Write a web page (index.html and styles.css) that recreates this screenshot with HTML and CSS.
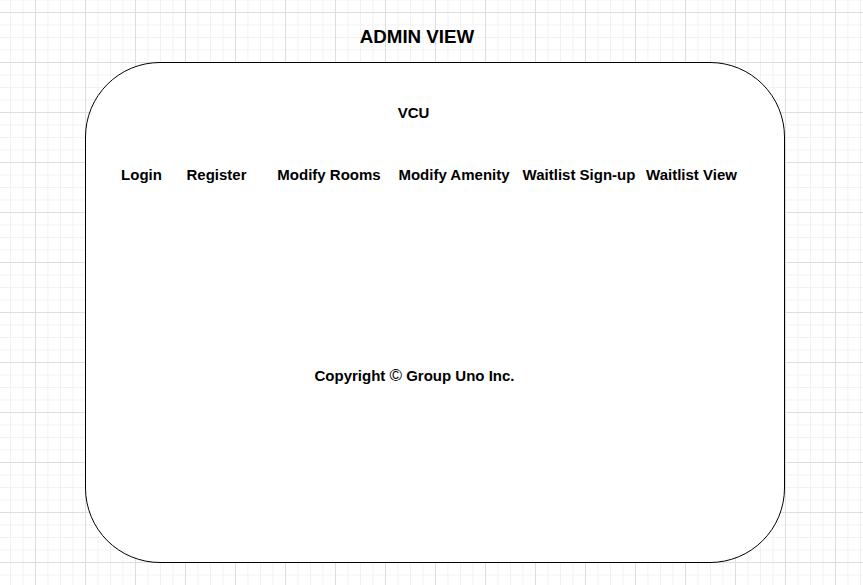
FILE: index.html
```html
<!DOCTYPE html>
<html lang="en">
<head>
<meta charset="utf-8">
<title>Admin View</title>
<link rel="stylesheet" href="styles.css">
</head>
<body>
<div class="page">
  <h1 class="title">ADMIN VIEW</h1>
  <div class="card">
    <div class="brand">VCU</div>
    <nav class="nav">
      <span class="nav-item">Login</span>
      <span class="nav-item">Register</span>
      <span class="nav-item">Modify Rooms</span>
      <span class="nav-item">Modify Amenity</span>
      <span class="nav-item">Waitlist Sign-up</span>
      <span class="nav-item">Waitlist View</span>
    </nav>
    <div class="footer">Copyright <span class="copy">©</span> Group Uno Inc.</div>
  </div>
</div>
</body>
</html>
```

FILE: styles.css
```css
html, body {
  margin: 0;
  padding: 0;
}

body {
  width: 863px;
  height: 585px;
  overflow: hidden;
  font-family: "Liberation Sans", Arial, sans-serif;
  color: #000;
  background-color: #fff;
  background-image:
    linear-gradient(to right, #dedede 1px, transparent 1px),
    linear-gradient(to bottom, #dedede 1px, transparent 1px),
    linear-gradient(to right, #f1f1f1 1px, transparent 1px),
    linear-gradient(to bottom, #f1f1f1 1px, transparent 1px);
  background-size: 50px 50px, 50px 50px, 12.5px 12.5px, 12.5px 12.5px;
  background-position: 35px 12px, 35px 12px, 10px 12px, 10px 12px;
}

.page {
  display: flex;
  flex-direction: column;
  padding-top: 26px;
}

.title {
  margin: 0;
  width: 834px;
  text-align: center;
  font-size: 18.75px;
  line-height: 22px;
  font-weight: bold;
}

.card {
  margin: 14px 0 0 85px;
  width: 700px;
  height: 501px;
  box-sizing: border-box;
  border: 1.5px solid #000;
  border-radius: 75px;
  background: #fff;
  display: flex;
  flex-direction: column;
  padding-top: 40.5px;
}

.brand,
.footer {
  width: 655px;
  text-align: center;
  font-size: 15px;
  line-height: 18px;
  font-weight: bold;
  white-space: nowrap;
}

.nav {
  margin: 44px 0 0 18px;
  display: grid;
  grid-template-columns: 75px 75px 150px 100px 150px 75px;
  font-size: 15px;
  line-height: 18px;
  font-weight: bold;
}

.nav-item {
  display: flex;
  justify-content: center;
  white-space: nowrap;
}

.footer {
  margin-top: 183px;
  width: 657px;
}

.copy {
  font-weight: normal;
  font-size: 17px;
  line-height: 18px;
}
```
